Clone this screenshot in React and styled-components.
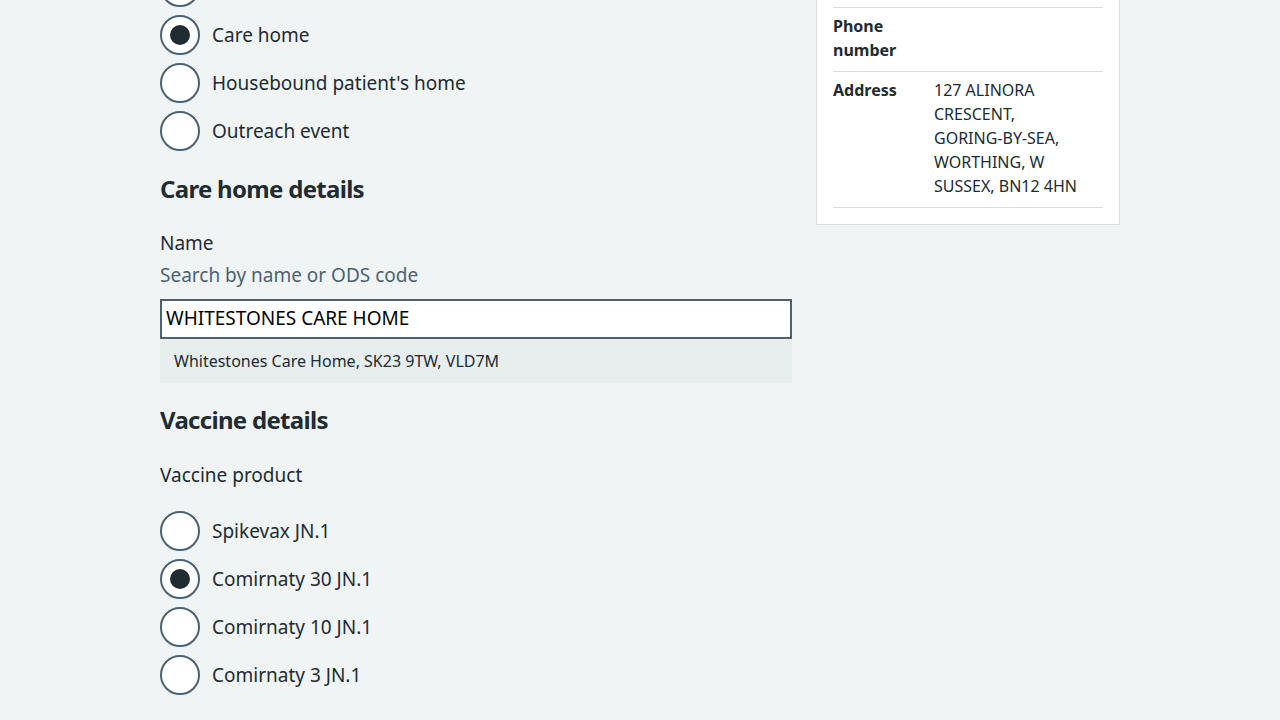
import React from 'react';
import styled, { createGlobalStyle } from 'styled-components';

const GlobalStyle = createGlobalStyle`
  html, body {
    margin: 0;
    padding: 0;
    overflow: hidden;
    background: #f0f4f5;
  }
  body {
    font-family: "Noto Sans", "Open Sans", Arial, sans-serif;
    color: #212b32;
  }
`;

// page is shown scrolled part-way down, as in the screenshot
const Page = styled.div`
  width: 960px;
  margin: -153px auto 0;
  display: grid;
  grid-template-columns: 632px 304px;
  column-gap: 24px;
  align-items: start;
`;

const MainColumn = styled.div`
  display: flex;
  flex-direction: column;
`;

const Legend = styled.div`
  font-size: 19px;
  line-height: 28px;
  margin-bottom: ${p => p.$gap}px;
`;

const RadioList = styled.div`
  display: flex;
  flex-direction: column;
  gap: 8px;
`;

const RadioRow = styled.label`
  display: flex;
  align-items: center;
  gap: 12px;
  height: 40px;
  font-size: 19px;
  line-height: 28px;
  cursor: pointer;
`;

const RadioCircle = styled.span`
  box-sizing: border-box;
  flex: none;
  width: 40px;
  height: 40px;
  border: 2px solid #4c6272;
  border-radius: 50%;
  background: #fff;
  display: flex;
  align-items: center;
  justify-content: center;

  &::after {
    content: '';
    width: 20px;
    height: 20px;
    border-radius: 50%;
    background: #212b32;
    display: ${p => (p.$checked ? 'block' : 'none')};
  }
`;

const Heading = styled.h2`
  margin: ${p => p.$top}px 0 0;
  font-size: 24px;
  line-height: 32px;
  font-weight: 700;
  letter-spacing: -0.7px;
`;

const FieldLabel = styled.div`
  margin-top: ${p => p.$top}px;
  margin-bottom: ${p => p.$bottom || 0}px;
  font-size: 19px;
  line-height: 28px;
`;

const Hint = styled.div`
  margin-top: 4px;
  font-size: 19px;
  line-height: 28px;
  color: #4c6272;
`;

const SearchInput = styled.input`
  box-sizing: border-box;
  margin-top: 10px;
  width: 100%;
  height: 40px;
  border: 2px solid #4c6272;
  border-radius: 0;
  background: #fff;
  padding: 0 4px 3px;
  font-family: inherit;
  font-size: 19px;
  color: #000;
  outline: none;
`;

const Suggestion = styled.div`
  height: 44px;
  display: flex;
  align-items: center;
  padding: 0 14px;
  background: #e8edee;
  font-size: 16px;
`;

const Card = styled.aside`
  background: #fff;
  border: 1px solid #d8dde0;
  padding: 16px;
`;

const SummaryList = styled.dl`
  margin: 0;
`;

const SummaryRow = styled.div`
  display: grid;
  grid-template-columns: 77px 1fr;
  column-gap: 24px;
  padding: 6px 0 9px;
  border-bottom: 1px solid #d8dde0;
  font-size: 16px;
  line-height: 24px;
`;

const Key = styled.dt`
  font-weight: 700;
`;

const Value = styled.dd`
  margin: 0;
`;

const Line = styled.span`
  display: block;
`;

const locations = [
  { label: 'Hospital hub', checked: false },
  { label: 'Community pharmacy', checked: false },
  { label: 'Care home', checked: true },
  { label: "Housebound patient's home", checked: false },
  { label: 'Outreach event', checked: false },
];

const vaccines = [
  { label: 'Spikevax JN.1', checked: false },
  { label: 'Comirnaty 30 JN.1', checked: true },
  { label: 'Comirnaty 10 JN.1', checked: false },
  { label: 'Comirnaty 3 JN.1', checked: false },
];

const patient = [
  { key: 'NHS number', value: ['943 476 5919'] },
  { key: 'Name', value: ['JOHN SMITH'] },
  { key: 'Born', value: ['2 April 1945'] },
  { key: 'Phone number', value: [] },
  {
    key: 'Address',
    value: ['127 ALINORA', 'CRESCENT,', 'GORING-BY-SEA,', 'WORTHING, W', 'SUSSEX, BN12 4HN'],
  },
];

function Radios({ items }) {
  return (
    <RadioList>
      {items.map(item => (
        <RadioRow key={item.label}>
          <RadioCircle $checked={item.checked} />
          {item.label}
        </RadioRow>
      ))}
    </RadioList>
  );
}

export default function App() {
  return (
    <>
      <GlobalStyle />
      <Page>
        <MainColumn>
          <Legend $gap={44}>Location type</Legend>
          <Radios items={locations} />

          <Heading $top={22}>Care home details</Heading>
          <FieldLabel $top={24}>Name</FieldLabel>
          <Hint>Search by name or ODS code</Hint>
          <SearchInput defaultValue="WHITESTONES CARE HOME" />
          <Suggestion>Whitestones Care Home, SK23 9TW, VLD7M</Suggestion>

          <Heading $top={21}>Vaccine details</Heading>
          <FieldLabel $top={25} $bottom={22}>Vaccine product</FieldLabel>
          <Radios items={vaccines} />
        </MainColumn>

        <Card>
          <SummaryList>
            {patient.map(row => (
              <SummaryRow key={row.key}>
                <Key>{row.key}</Key>
                <Value>
                  {row.value.map(line => (
                    <Line key={line}>{line}</Line>
                  ))}
                </Value>
              </SummaryRow>
            ))}
          </SummaryList>
        </Card>
      </Page>
    </>
  );
}
